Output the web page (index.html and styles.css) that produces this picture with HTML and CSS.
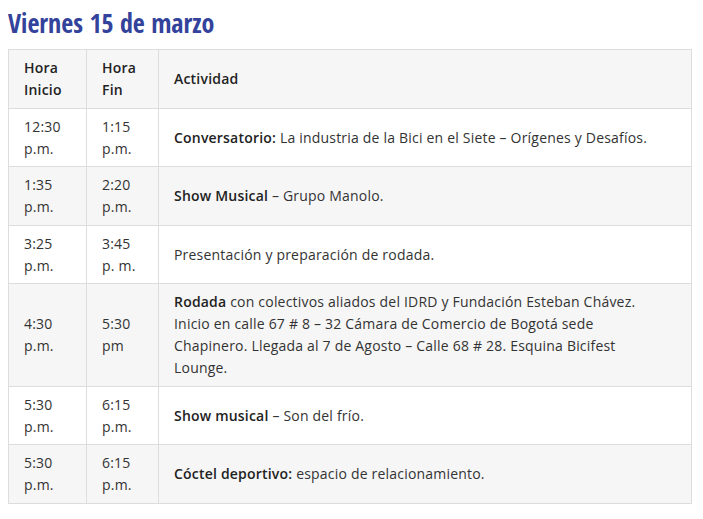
FILE: index.html
```html
<!DOCTYPE html>
<html lang="es">
<head>
<meta charset="utf-8">
<link rel="stylesheet" href="styles.css">
</head>
<body>
<h2 class="day-title">Viernes 15 de marzo</h2>
<table class="schedule">
  <thead>
    <tr><th class="c1">Hora Inicio</th><th class="c2">Hora Fin</th><th class="c3">Actividad</th></tr>
  </thead>
  <tbody>
    <tr><td>12:30 p.m.</td><td>1:15 p.m.</td><td class="c3"><b>Conversatorio:</b> La industria de la Bici en el Siete – Orígenes y Desafíos.</td></tr>
    <tr><td>1:35 p.m.</td><td>2:20 p.m.</td><td class="c3"><b>Show Musical</b> – Grupo Manolo.</td></tr>
    <tr><td>3:25 p.m.</td><td>3:45 p. m.</td><td class="c3">Presentación y preparación de rodada.</td></tr>
    <tr><td>4:30 p.m.</td><td>5:30 pm</td><td class="c3"><b>Rodada</b> con colectivos aliados del IDRD y Fundación Esteban Chávez. Inicio en calle 67 # 8 – 32 Cámara de Comercio de Bogotá sede Chapinero. Llegada al 7 de Agosto – Calle 68 # 28. Esquina Bicifest Lounge.</td></tr>
    <tr><td>5:30 p.m.</td><td>6:15 p.m.</td><td class="c3"><b>Show musical</b> – Son del frío.</td></tr>
    <tr><td>5:30 p.m.</td><td>6:15 p.m.</td><td class="c3"><b>Cóctel deportivo:</b> espacio de relacionamiento.</td></tr>
  </tbody>
</table>
</body>
</html>
```
FILE: styles.css
```css
body {
  margin: 8px;
  background: #fff;
  font-family: "Open Sans", Lato, sans-serif;
  color: #333;
}
.day-title {
  margin: 0 0 11px 0;
  font-family: "Open Sans Condensed", "Open Sans", sans-serif;
  font-weight: bold;
  font-size: 26px;
  line-height: 30px;
  color: #33429a;
}
.schedule {
  width: 684px;
  border-collapse: collapse;
  font-size: 14px;
  line-height: 22px;
  letter-spacing: 0.2px;
}
.schedule th, .schedule td {
  border: 1px solid #ddd;
  padding: 7px 15px 6.5px;
  text-align: left;
  vertical-align: middle;
}
.schedule .c3 { padding-right: 24px; }
.schedule th {
  font-weight: 600;
  color: #222;
}
.schedule .c1 { width: 47px; }
.schedule .c2 { width: 41px; }
.schedule thead tr { background: #f6f6f6; }
.schedule tbody tr:nth-child(even) { background: #f6f6f6; }
.schedule b { font-weight: 600; color: #222; }
```
